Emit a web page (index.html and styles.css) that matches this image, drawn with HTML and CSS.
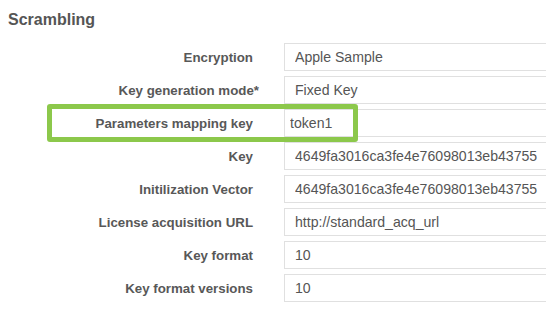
FILE: index.html
```html
<!DOCTYPE html>
<html lang="en">
<head>
  <meta charset="UTF-8" />
  <meta name="viewport" content="width=device-width, initial-scale=1.0" />
  <title>Scrambling</title>
  <link rel="stylesheet" href="styles.css">
</head>
<body>
  <div class="panel">
    <h3 class="panel-title">Scrambling</h3>
    <form class="scrambling-form">
      <div class="form-row">
        <label for="encryption">Encryption</label>
        <input type="text" id="encryption" value="Apple Sample" />
      </div>
      <div class="form-row">
        <label for="keygen">Key generation mode<span class="req">*</span></label>
        <input type="text" id="keygen" value="Fixed Key" />
      </div>
      <div class="form-row is-highlighted">
        <label for="mapping">Parameters mapping key</label>
        <input type="text" id="mapping" class="tight" value="token1" />
        <div class="highlight"></div>
      </div>
      <div class="form-row">
        <label for="key">Key</label>
        <input type="text" id="key" value="4649fa3016ca3fe4e76098013eb43755" />
      </div>
      <div class="form-row">
        <label for="iv">Initilization Vector</label>
        <input type="text" id="iv" value="4649fa3016ca3fe4e76098013eb43755" />
      </div>
      <div class="form-row">
        <label for="laurl">License acquisition URL</label>
        <input type="text" id="laurl" value="http://standard_acq_url" />
      </div>
      <div class="form-row">
        <label for="keyformat">Key format</label>
        <input type="text" id="keyformat" value="10" />
      </div>
      <div class="form-row">
        <label for="keyversions">Key format versions</label>
        <input type="text" id="keyversions" value="10" />
      </div>
    </form>
  </div>
</body>
</html>
```
FILE: styles.css
```css
body {
  margin: 0;
  padding: 0;
  background: #fff;
  font-family: "Liberation Sans", Arial, sans-serif;
  overflow: hidden;
}

.panel {
  padding: 0 0 0 8px;
}

.panel-title {
  margin: 10px 0 13px;
  font-size: 16px;
  line-height: 20px;
  font-weight: bold;
  color: #555;
}

.scrambling-form {
  margin: 0 0 0 -8px;
}

.form-row {
  position: relative;
  display: flex;
  align-items: center;
  height: 28px;
  margin-bottom: 5px;
}

label {
  flex: none;
  width: 253px;
  margin-right: 31px;
  text-align: right;
  font-size: 13.3px;
  font-weight: bold;
  color: #585858;
}

/* asterisk hangs past the label edge */
.req {
  margin-right: -6px;
}

input {
  flex: none;
  width: 264px;
  height: 28px;
  padding: 0 10px;
  font-family: "Liberation Sans", Arial, sans-serif;
  font-size: 14.1px;
  color: #555;
  border: 1px solid #e0e0e0;
  border-right: none;
  border-radius: 0;
  box-sizing: border-box;
  outline: none;
}

input.tight {
  padding-left: 5px;
}

/* green marker drawn over the row */
.highlight {
  position: absolute;
  left: 47px;
  top: -5px;
  width: 311px;
  height: 38px;
  border: 5px solid #8cc84b;
  border-radius: 3px;
  box-sizing: border-box;
}
```
